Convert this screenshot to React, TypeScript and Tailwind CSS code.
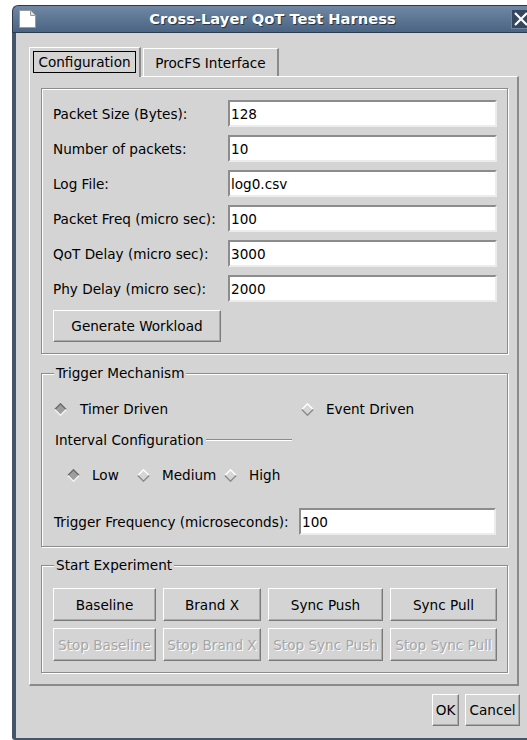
import type { ReactNode } from "react";

/* ── shared bevel styles ─────────────────────────── */
const etched = "border border-[#8c8c8c] shadow-[inset_1px_1px_0_#ffffff,1px_1px_0_#ffffff]";
const raised =
  "border border-t-white border-l-white border-r-[#7a7a7a] border-b-[#7a7a7a] shadow-[inset_-1px_-1px_0_#ababab] bg-[#d4d4d4]";
const sunken =
  "border-2 border-t-[#8c8c8c] border-l-[#8c8c8c] border-r-[#ececec] border-b-[#ececec] bg-white";

function Diamond({ on }: { on?: boolean }) {
  return (
    <svg width="13" height="13" viewBox="0 0 13 13" className="shrink-0">
      <polygon points="6.5,0.8 12.2,6.5 6.5,12.2 0.8,6.5" fill={on ? "#9e9e9e" : "#d6d6d6"} />
      <polyline points="0.8,6.5 6.5,0.8 12.2,6.5" fill="none" stroke={on ? "#6a6a6a" : "#ffffff"} strokeWidth="1.4" />
      <polyline points="0.8,6.5 6.5,12.2 12.2,6.5" fill="none" stroke={on ? "#f4f4f4" : "#8a8a8a"} strokeWidth="1.4" />
    </svg>
  );
}

function Radio({ label, on, gap = "gap-[12px]" }: { label: string; on?: boolean; gap?: string }) {
  return (
    <div className={`flex items-center ${gap}`}>
      <Diamond on={on} />
      <span>{label}</span>
    </div>
  );
}

function Button({
  children,
  className = "",
  disabled,
}: {
  children: ReactNode;
  className?: string;
  disabled?: boolean;
}) {
  return (
    <button
      type="button"
      className={`flex items-center justify-center whitespace-nowrap ${raised} ${className} ${
        disabled ? "text-[#a6a6a6] [text-shadow:1px_1px_0_#ffffff]" : "text-black"
      }`}
    >
      {children}
    </button>
  );
}

function Field({ label, value }: { label: string; value: string }) {
  return (
    <div className="flex h-[27px] items-center">
      <span className="w-[175px]">{label}</span>
      <div className={`flex h-[27px] w-[269px] items-center pl-[1px] ${sunken}`}>{value}</div>
    </div>
  );
}

function Group({ title, children }: { title: string; children: ReactNode }) {
  return (
    <fieldset className={`w-[467px] ${etched}`}>
      <legend className="ml-[12px] bg-[#d4d4d4] px-[2px] leading-[16px]">{title}</legend>
      {children}
    </fieldset>
  );
}

/* ── window title bar ───────────────────────────── */
function TitleBar() {
  return (
    <div className="flex h-[28px] shrink-0 items-center rounded-tl-[6px] border-t border-l border-b border-[#2c3a4b] bg-gradient-to-b from-[#7088a4] to-[#4a6483]">
      <div className="flex w-[26px] pl-[5px]">
        <svg width="19" height="20" viewBox="0 0 19 20">
          <path d="M1.5 1.5h11l5 5v12h-16z" fill="#ffffff" stroke="#9a9a9a" />
          <path d="M12.5 1.5v5h5" fill="#e2e2e2" stroke="#9a9a9a" />
        </svg>
      </div>
      <div className="flex-1 text-center text-[14.7px] font-bold text-white [text-shadow:1px_1px_0_#2a3646]">
        Cross-Layer QoT Test Harness
      </div>
      <div className="flex w-[26px] pl-[5px]">
        <div className="flex h-[20px] w-[20px] items-center justify-center border border-[#6f84a0] bg-[#34475e]">
          <svg width="14" height="14" viewBox="0 0 14 14">
            <path d="M1 1l12 12M13 1L1 13" stroke="#ffffff" strokeWidth="2.2" />
          </svg>
        </div>
      </div>
    </div>
  );
}

/* ── notebook tabs ──────────────────────────────── */
function Tabs() {
  return (
    <div className="flex h-[29px] items-start">
      <div className="relative z-10 h-[30px] w-[112px] border-t border-l border-r-2 border-t-white border-l-white border-r-[#8a8a8a] bg-[#d4d4d4] p-[3px]">
        <div className="flex h-[22px] w-[103px] items-center justify-center border border-black">Configuration</div>
      </div>
      <div className="ml-[2px] mt-[1px] flex h-[28px] w-[136px] items-center justify-center border-t border-l border-r-2 border-t-white border-l-white border-r-[#8a8a8a]">
        ProcFS Interface
      </div>
    </div>
  );
}

export default function App() {
  return (
    <div className="h-[740px] w-[527px] overflow-hidden bg-white font-['DejaVu_Sans',sans-serif] text-[13.6px] leading-[16px] text-black">
      <div className="ml-[12px] mt-[5px] flex h-[735px] w-[520px] flex-col">
        <TitleBar />
        <div className="flex flex-1 flex-col rounded-bl-[3px] border-l-4 border-b-2 border-[#44566c] bg-[#d4d4d4] pl-[13px] pt-[14px]">
          <Tabs />

          {/* tab page */}
          <div className="flex h-[610px] w-[490px] flex-col border-t border-l border-r-2 border-b-2 border-t-white border-l-white border-r-[#8a8a8a] border-b-[#8a8a8a] pl-[11px] pt-[11px]">
            {/* workload settings */}
            <div className={`h-[266px] w-[467px] pl-[11px] pt-[11px] ${etched}`}>
              <div className="flex flex-col gap-[8px]">
                <Field label="Packet Size (Bytes):" value="128" />
                <Field label="Number of packets:" value="10" />
                <Field label="Log File:" value="log0.csv" />
                <Field label="Packet Freq (micro sec):" value="100" />
                <Field label="QoT Delay (micro sec):" value="3000" />
                <Field label="Phy Delay (micro sec):" value="2000" />
              </div>
              <Button className="mt-[8px] h-[32px] w-[168px]">Generate Workload</Button>
            </div>

            <div className="mt-[11px]">
              <Group title="Trigger Mechanism">
                <div className="mt-[18px] flex h-[20px] items-center pl-[12px]">
                  <div className="w-[247px]">
                    <Radio label="Timer Driven" on gap="gap-[13px]" />
                  </div>
                  <Radio label="Event Driven" />
                </div>
                <div className="mt-[13px] flex h-[16px] w-[250px] items-center pl-[13px]">
                  <span>Interval Configuration</span>
                  <div className="ml-[2px] h-[2px] flex-1 border-t border-b border-t-[#8c8c8c] border-b-white" />
                </div>
                <div className="mt-[17px] flex h-[20px] items-center pl-[25px]">
                  <div className="w-[70px]">
                    <Radio label="Low" on />
                  </div>
                  <div className="w-[87px]">
                    <Radio label="Medium" />
                  </div>
                  <Radio label="High" />
                </div>
                <div className="mt-[23px] flex h-[27px] items-center pl-[12px]">
                  <span className="w-[245px]">Trigger Frequency (microseconds):</span>
                  <div className={`flex h-[27px] w-[197px] items-center pl-[1px] ${sunken}`}>100</div>
                </div>
                <div className="h-[11px]" />
              </Group>
            </div>

            <div className="mt-[10px]">
              <Group title="Start Experiment">
                <div className="mt-[15px] flex gap-[7px] pl-[11px]">
                  <Button className="h-[33px] w-[103px]">Baseline</Button>
                  <Button className="h-[33px] w-[98px]">Brand X</Button>
                  <Button className="h-[33px] w-[115px]">Sync Push</Button>
                  <Button className="h-[33px] w-[107px]">Sync Pull</Button>
                </div>
                <div className="mt-[7px] flex gap-[7px] pl-[11px]">
                  <Button disabled className="h-[33px] w-[103px]">Stop Baseline</Button>
                  <Button disabled className="h-[33px] w-[98px]">Stop Brand X</Button>
                  <Button disabled className="h-[33px] w-[115px]">Stop Sync Push</Button>
                  <Button disabled className="h-[33px] w-[107px]">Stop Sync Pull</Button>
                </div>
                <div className="h-[11px]" />
              </Group>
            </div>
          </div>

          {/* dialog buttons */}
          <div className="mt-[8px] flex w-[491px] justify-end gap-[6px]">
            <Button className="h-[32px] w-[27px]">OK</Button>
            <Button className="h-[32px] w-[55px]">Cancel</Button>
          </div>
        </div>
      </div>
    </div>
  );
}
